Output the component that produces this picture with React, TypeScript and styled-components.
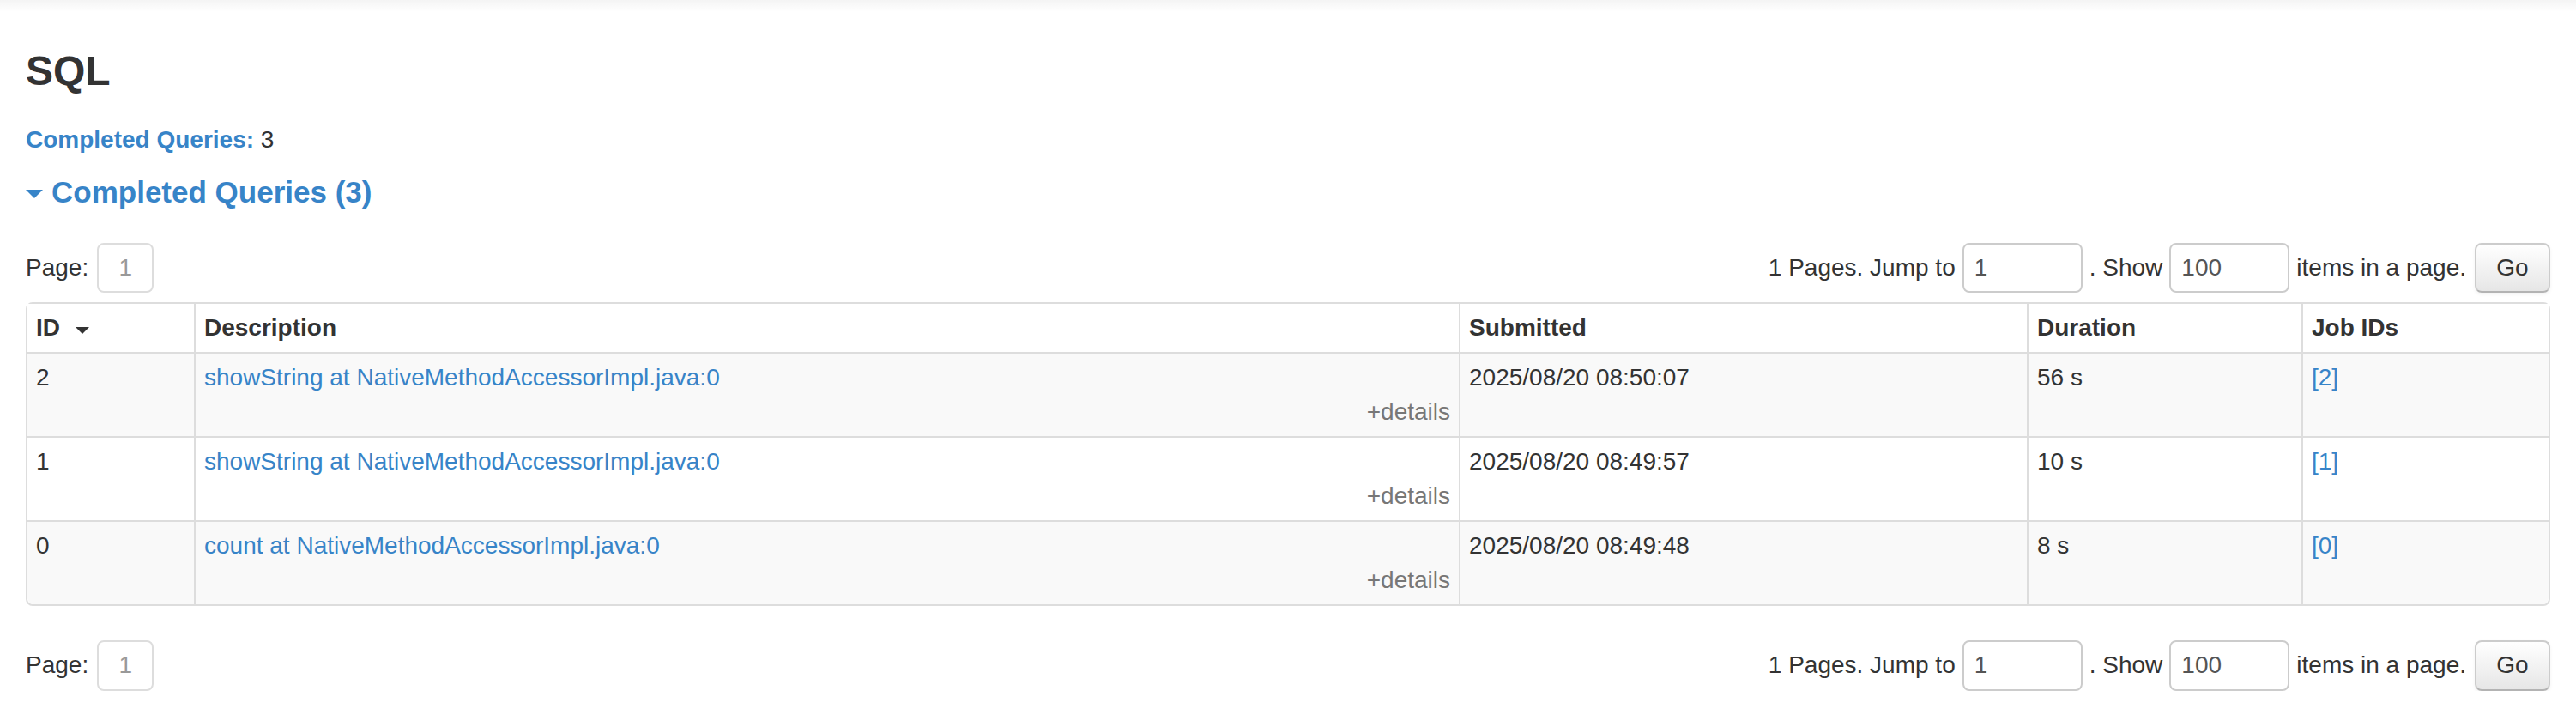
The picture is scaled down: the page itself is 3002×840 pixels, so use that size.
import React from "react";
import styled, { createGlobalStyle } from "styled-components";

const GlobalStyle = createGlobalStyle`
  html, body {
    margin: 0;
    padding: 0;
    background: #fff;
  }
  body {
    font-family: "Liberation Sans", Arial, Helvetica, sans-serif;
    font-size: 14px;
    line-height: 20px;
    color: #333;
  }
`;

// the reference is a 2x screenshot, so the whole page is drawn at 1x and zoomed
const Page = styled.div`
  zoom: 2;
  width: 1501px;
`;

const NavShadow = styled.div`
  height: 7px;
  background: linear-gradient(to bottom, rgba(0, 0, 0, 0.045), rgba(0, 0, 0, 0));
`;

const Container = styled.div`
  padding: 0 15px;
`;

const Title = styled.h3`
  margin: 20px 0 0;
  font-size: 24px;
  line-height: 28.8px;
  font-weight: 700;
  color: #333;
`;

const Summary = styled.ul`
  list-style: none;
  margin: 15.6px 0 0;
  padding: 0;
  line-height: 20px;
`;

const Link = styled.a`
  color: #3784c8;
  text-decoration: none;
  cursor: pointer;
`;

const SectionHeader = styled.h4`
  margin: 10px 0 0;
  font-size: 17.5px;
  line-height: 21px;
  font-weight: 700;
  color: #3784c8;
  display: flex;
  align-items: center;
  gap: 5px;
  cursor: pointer;
`;

const ArrowOpen = styled.span`
  display: inline-block;
  width: 0;
  height: 0;
  border-left: 5px solid transparent;
  border-right: 5px solid transparent;
  border-top: 5px solid #3784c8;
  margin-top: 2px;
`;

const Pager = styled.div<{ $top: number }>`
  margin-top: ${(p) => p.$top}px;
  height: 29.3px;
  display: flex;
  align-items: center;
  justify-content: space-between;
`;

const PagerSide = styled.div`
  display: flex;
  align-items: center;
  gap: 4px;
`;

const PageBox = styled.span`
  box-sizing: border-box;
  width: 33px;
  height: 29.3px;
  margin-left: 1px;
  border: 1px solid #ddd;
  border-radius: 4px;
  display: flex;
  align-items: center;
  justify-content: center;
  color: #999;
`;

const TextInput = styled.input`
  box-sizing: border-box;
  width: 70px;
  height: 29.3px;
  padding: 0 6px;
  border: 1px solid #ccc;
  border-radius: 4px;
  font-family: inherit;
  font-size: 14px;
  color: #555;
  background: #fff;
  outline: none;
`;

const GoButton = styled.button`
  box-sizing: border-box;
  width: 44px;
  height: 29.3px;
  margin-left: 1px;
  padding: 0;
  border: 1px solid #ccc;
  border-bottom-color: #b3b3b3;
  border-radius: 4px;
  background: linear-gradient(to bottom, #ffffff, #e6e6e6);
  box-shadow: 0 1px 2px rgba(0, 0, 0, 0.05);
  font-family: inherit;
  font-size: 14px;
  color: #333;
  cursor: pointer;
`;

const Table = styled.table`
  margin-top: 5.3px;
  width: 100%;
  table-layout: fixed;
  border-collapse: separate;
  border-spacing: 0;
  border: 1px solid #ddd;
  border-radius: 4px;
  line-height: 20px;
`;

const Th = styled.th`
  padding: 4px 5px;
  text-align: left;
  font-weight: 700;
  color: #333;
  background: #fff;
  vertical-align: top;
  & + & {
    border-left: 1px solid #ddd;
  }
`;

const Row = styled.tr<{ $striped: boolean }>`
  background: ${(p) => (p.$striped ? "#f9f9f9" : "#fff")};
  &:last-child td:first-child {
    border-bottom-left-radius: 4px;
  }
  &:last-child td:last-child {
    border-bottom-right-radius: 4px;
  }
`;

const Td = styled.td`
  padding: 4px 5px;
  border-top: 1px solid #ddd;
  vertical-align: top;
  color: #333;
  & + & {
    border-left: 1px solid #ddd;
  }
`;

const SortArrow = styled.span`
  display: inline-block;
  width: 0;
  height: 0;
  margin-left: 9px;
  border-left: 4px solid transparent;
  border-right: 4px solid transparent;
  border-top: 4px solid #333;
  vertical-align: 1px;
`;

const Details = styled.div`
  text-align: right;
  color: #777;
  cursor: pointer;
`;

type Query = {
  id: number;
  description: string;
  submitted: string;
  duration: string;
  jobs: number[];
};

const queries: Query[] = [
  {
    id: 2,
    description: "showString at NativeMethodAccessorImpl.java:0",
    submitted: "2025/08/20 08:50:07",
    duration: "56 s",
    jobs: [2],
  },
  {
    id: 1,
    description: "showString at NativeMethodAccessorImpl.java:0",
    submitted: "2025/08/20 08:49:57",
    duration: "10 s",
    jobs: [1],
  },
  {
    id: 0,
    description: "count at NativeMethodAccessorImpl.java:0",
    submitted: "2025/08/20 08:49:48",
    duration: "8 s",
    jobs: [0],
  },
];

function Pagination({ top }: { top: number }) {
  return (
    <Pager $top={top}>
      <PagerSide>
        <span>Page:</span>
        <PageBox>1</PageBox>
      </PagerSide>
      <PagerSide>
        <span>1 Pages. Jump to</span>
        <TextInput defaultValue="1" />
        <span>. Show</span>
        <TextInput defaultValue="100" />
        <span>items in a page.</span>
        <GoButton>Go</GoButton>
      </PagerSide>
    </Pager>
  );
}

function App() {
  return (
    <Page>
      <GlobalStyle />
      <NavShadow />
      <Container>
        <Title>SQL</Title>
        <Summary>
          <li>
            <Link>
              <strong>Completed Queries:</strong>
            </Link>{" "}
            3
          </li>
        </Summary>
        <SectionHeader>
          <ArrowOpen />
          <span>Completed Queries (3)</span>
        </SectionHeader>
        <Pagination top={19} />
        <Table>
          <colgroup>
            <col style={{ width: 97 }} />
            <col style={{ width: 737 }} />
            <col style={{ width: 331 }} />
            <col style={{ width: 160 }} />
            <col />
          </colgroup>
          <thead>
            <tr>
              <Th>
                ID
                <SortArrow />
              </Th>
              <Th>Description</Th>
              <Th>Submitted</Th>
              <Th>Duration</Th>
              <Th>Job IDs</Th>
            </tr>
          </thead>
          <tbody>
            {queries.map((q, i) => (
              <Row key={q.id} $striped={i % 2 === 0}>
                <Td>{q.id}</Td>
                <Td>
                  <Link>{q.description}</Link>
                  <Details>+details</Details>
                </Td>
                <Td>{q.submitted}</Td>
                <Td>{q.duration}</Td>
                <Td>
                  {q.jobs.map((j) => (
                    <Link key={j}>[{j}]</Link>
                  ))}
                </Td>
              </Row>
            ))}
          </tbody>
        </Table>
        <Pagination top={20} />
      </Container>
    </Page>
  );
}

export default App;
